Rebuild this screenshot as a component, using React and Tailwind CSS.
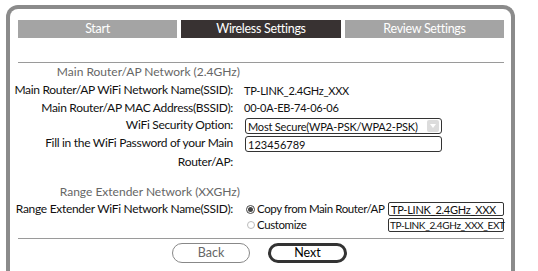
export default function App() {
  const font = { fontFamily: 'Lato, "Noto Sans", sans-serif' };
  return (
    <div className="h-[271px] w-[538px] overflow-hidden bg-white" style={font}>
      <div className="ml-[6px] mt-[5px] h-[300px] w-[509px] rounded-t-[12px] border-4 border-b-0 border-[#8b8b8b] pl-[8px] pr-[7px] pt-[11px]">
        <div className="flex gap-[4px] text-[12.5px] tracking-[-0.3px] text-white">
          <div className="flex h-[18px] w-[159px] items-center justify-center bg-[#a4a4a4]">Start</div>
          <div className="flex h-[18px] w-[160px] items-center justify-center bg-[#383232]">Wireless Settings</div>
          <div className="flex h-[18px] w-[159px] items-center justify-center bg-[#a4a4a4]">Review Settings</div>
        </div>
        <div className="mt-[24px] h-px bg-[#9a9a9a]" />
        <div className="ml-[-12px] whitespace-nowrap text-[12px] leading-none text-[#111]">
          <div className="flex h-[18px] items-center">
            <div className="flex w-[234px] justify-end text-[#666]">Main Router/AP Network (2.4GHz)</div>
          </div>
          <div className="flex h-[18px] items-center">
            <div className="flex w-[227px] justify-end tracking-[-0.3px]">Main Router/AP WiFi Network Name(SSID):</div>
            <div className="ml-[11px] text-[11px] tracking-[-0.25px]">TP-LINK_2.4GHz_XXX</div>
          </div>
          <div className="flex h-[17px] items-center">
            <div className="flex w-[227px] justify-end tracking-[-0.3px]">Main Router/AP MAC Address(BSSID):</div>
            <div className="ml-[11px] text-[11px] tracking-[-0.25px]">00-0A-EB-74-06-06</div>
          </div>
          <div className="flex h-[18px] items-center">
            <div className="flex w-[227px] justify-end tracking-[-0.3px]">WiFi Security Option:</div>
            <div className="ml-[12px] mt-[2px] flex h-[16px] w-[197px] items-center justify-between rounded-[3px] border border-[#333] pl-[2px] pr-[2px] text-[11px] tracking-[-0.2px]">
              <span>Most Secure(WPA-PSK/WPA2-PSK)</span>
              <span className="flex h-[12px] w-[12px] items-center justify-center rounded-[2px] bg-[#dcdcdc]">
                <svg width="6" height="4" viewBox="0 0 6 4"><path d="M0 0h6L3 4z" fill="#fff" /></svg>
              </span>
            </div>
          </div>
          <div className="flex h-[18px] items-center">
            <div className="flex w-[227px] justify-end tracking-[-0.3px]">Fill in the WiFi Password of your Main</div>
            <div className="ml-[12px] mt-[2px] flex h-[16px] w-[197px] items-center rounded-[3px] border border-[#333] pl-[2px] text-[11px]">123456789</div>
          </div>
          <div className="flex h-[20px] items-center">
            <div className="flex w-[227px] justify-end tracking-[-0.3px]">Router/AP:</div>
          </div>
          <div className="mt-[11px] flex h-[18px] items-center">
            <div className="flex w-[234px] justify-end text-[#666]">Range Extender Network (XXGHz)</div>
          </div>
          <div className="flex h-[16px] items-center">
            <div className="flex w-[227px] justify-end tracking-[-0.3px]">Range Extender WiFi Network Name(SSID):</div>
            <div className="ml-[13px] flex w-[141px] items-center text-[11.5px] tracking-[-0.4px]">
              <span className="flex h-[9px] w-[9px] items-center justify-center rounded-full border border-[#444]">
                <span className="h-[5px] w-[5px] rounded-full bg-[#444]" />
              </span>
              <span className="ml-[2px]">Copy from Main Router/AP</span>
            </div>
            <div className="ml-[1px] flex h-[14px] w-[116px] items-center rounded-[2px] border border-[#333] pl-[2px] text-[11px] tracking-[-0.25px]">TP-LINK_2.4GHz_XXX</div>
          </div>
          <div className="flex h-[16px] items-center">
            <div className="w-[227px]" />
            <div className="ml-[14px] flex w-[141px] items-center text-[11.5px] tracking-[-0.4px]">
              <span className="h-[8px] w-[8px] rounded-full border border-[#bbb]" />
              <span className="ml-[2px]">Customize</span>
            </div>
            <div className="flex h-[14px] w-[116px] items-center rounded-[2px] border border-[#333] pl-px text-[10px] tracking-[-0.35px]">TP-LINK_2.4GHz_XXX_EXT</div>
          </div>
        </div>
        <div className="mt-[5px] h-px bg-[#9a9a9a]" />
        <div className="mt-[4px] flex">
          <div className="ml-[154px] flex h-[20px] w-[78px] items-center justify-center rounded-full border border-[#888] text-[12.5px] text-[#666]">Back</div>
          <div className="ml-[18px] flex h-[20px] w-[79px] items-center justify-center rounded-full border-[3px] border-[#333] text-[12.5px] text-black">Next</div>
        </div>
      </div>
    </div>
  );
}
